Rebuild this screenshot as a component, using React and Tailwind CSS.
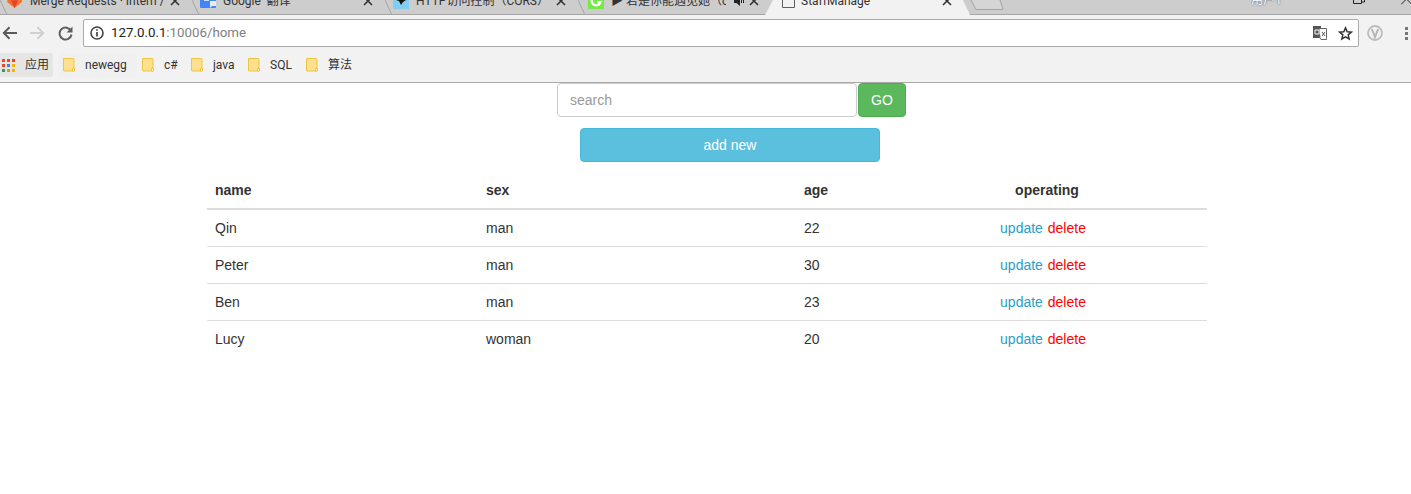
import React from "react";

const chrome = "font-['Roboto','Noto_Sans_CJK_SC',sans-serif]";

const rows = [
  { name: "Qin", sex: "man", age: 22 },
  { name: "Peter", sex: "man", age: 30 },
  { name: "Ben", sex: "man", age: 23 },
  { name: "Lucy", sex: "woman", age: 20 },
];

const bookmarks = [
  { label: "newegg", width: "w-[79px]", active: true },
  { label: "c#", width: "w-[49px]" },
  { label: "java", width: "w-[57px]" },
  { label: "SQL", width: "w-[58px]" },
  { label: "算法", width: "w-[60px]" },
];

const CloseIcon = () => (
  <svg width="10" height="10" viewBox="0 0 10 10" className="shrink-0">
    <path d="M1 1l8 8M9 1l-8 8" stroke="#333" strokeWidth="1.6" />
  </svg>
);

const Slant = () => (
  <svg width="8" height="15" className="absolute left-0 top-0">
    <path d="M0 0l6.5 14" stroke="#a5a5a5" fill="none" />
  </svg>
);

const Tab = ({ width, pad, right, icon, title, textWidth, extra }) => (
  <div className={`relative flex h-[15px] shrink-0 items-end overflow-hidden ${width}`}>
    <Slant />
    <div className={`flex h-[28px] w-full items-center ${pad} ${right}`}>
      {icon}
      <span className={`ml-[7px] overflow-hidden whitespace-nowrap text-[12px] text-[#333] ${textWidth}`}>{title}</span>
      <span className="ml-auto flex items-center gap-[5px]">
        {extra}
        <CloseIcon />
      </span>
    </div>
  </div>
);

const GitlabIcon = () => (
  <svg width="17" height="14" viewBox="0 0 17 16" className="shrink-0">
    <path d="M8.5 16L0 9l2-8 2.500 6h9L16 1l1 8z" fill="#fc6d26" />
    <path d="M8.500 16L4.500 7h8z" fill="#e24329" />
  </svg>
);

const TranslateIcon = () => (
  <svg width="16" height="16" viewBox="0 0 16 16" className="shrink-0">
    <rect width="16" height="15" rx="1" fill="#4285f4" />
    <path d="M10 8h6v5h-4l-2 2z" fill="#e8eaed" />
    <path d="M4 7h5" stroke="#fff" strokeWidth="1.500" />
  </svg>
);

const HttpIcon = () => (
  <svg width="16" height="16" viewBox="0 0 16 16" className="shrink-0">
    <rect width="16" height="16" fill="#83cdf2" />
    <path d="M4 2h9v5l-3 2-2 3-2-4-3-1z" fill="#111" />
  </svg>
);

const GrammarlyIcon = () => (
  <svg width="16" height="16" viewBox="0 0 16 16" className="shrink-0">
    <rect width="16" height="16" fill="#74e84b" />
    <path d="M12 5.500A4.500 4.500 0 1 0 12.500 9H9" stroke="#fff" strokeWidth="2.200" fill="none" />
  </svg>
);

const DocIcon = () => (
  <svg width="13" height="14" viewBox="0 0 13 14" className="shrink-0">
    <path d="M.5.500h8l4 4v9H.5z" fill="#f2f2f2" stroke="#5f5f5f" />
  </svg>
);

const SpeakerIcon = () => (
  <svg width="10" height="10" viewBox="0 0 10 10" className="shrink-0">
    <path d="M0 3h2.500L6 0v10L2.500 7H0z" fill="#222" />
    <path d="M7.500 2v5M9.500 1v6" stroke="#222" />
  </svg>
);

const FolderIcon = () => (
  <svg width="12" height="14" viewBox="0 0 12 14" className="shrink-0">
    <path d="M.5.500h9.500a1 1 0 0 1 1 1v11.500H1a.5.5 0 0 1-.5-.5z" fill="#ffe08e" stroke="#ecc545" />
    <path d="M9.500 10.500h2v2.500h-2z" fill="#fff" stroke="#ecc545" />
  </svg>
);

const AppsIcon = () => {
  const dots = ["#e9452f", "#e9452f", "#e9452f", "#e9452f", "#3b82e4", "#f5b400", "#2f9e52", "#f58a1f", "#f5b400"];
  return (
    <div className="grid shrink-0 grid-cols-[repeat(3,3px)] gap-[2px]">
      {dots.map((color, i) => (
        <svg key={i} width="3" height="3" className="block">
          <rect width="3" height="3" fill={color} />
        </svg>
      ))}
    </div>
  );
};

const TabStrip = () => (
  <div className={`flex h-[15px] items-start overflow-hidden bg-[#cdcdcd] shadow-[inset_0_-1px_0_#a5a5a5] ${chrome}`}>
    <Tab width="w-[192px]" pad="pl-[6px]" right="pr-[12px]" icon={<GitlabIcon />} title="Merge Requests · Intern /" textWidth="w-[135px]" />
    <Tab width="w-[193px]" pad="pl-[8px]" right="pr-[12px]" icon={<TranslateIcon />} title={"Google\u00a0\u00a0翻译"} textWidth="w-[130px]" />
    <Tab width="w-[193px]" pad="pl-[8px]" right="pr-[12px]" icon={<HttpIcon />} title="HTTP访问控制（CORS）" textWidth="w-[130px]" />
    <Tab
      width="w-[187px]"
      pad="pl-[10px]"
      right="pr-[6px]"
      icon={<GrammarlyIcon />}
      title="▶ 若是你能遇见她（c"
      textWidth="w-[115px]"
      extra={<SpeakerIcon />}
    />
    <div className="flex h-[15px] w-[205px] shrink-0 items-end overflow-hidden bg-[#f2f2f2] [clip-path:polygon(8px_0,198px_0,100%_100%,0_100%)]">
      <div className="flex h-[28px] w-full items-center pl-[17px] pr-[18px]">
        <DocIcon />
        <span className="ml-[6px] whitespace-nowrap text-[12px] text-[#333]">StaffManage</span>
        <span className="ml-auto">
          <CloseIcon />
        </span>
      </div>
    </div>
    <svg width="34" height="15" className="shrink-0">
      <path d="M1 0l5 9.500h27L30 0" fill="#d5d5d5" stroke="#a5a5a5" />
    </svg>
    <div className="ml-[247px] flex h-[15px] w-[31px] shrink-0 items-end overflow-hidden">
      <span className="mb-[8px] whitespace-nowrap text-[12px] leading-[14px] text-white [text-shadow:0_0_2px_#333]">用户1</span>
    </div>
    <svg width="12" height="5" className="ml-[71px] shrink-0">
      <path d="M.5 0v3.500h8V0M8.500 2h3V0" fill="none" stroke="#222" />
    </svg>
    <svg width="12" height="5" className="ml-[36px] shrink-0">
      <path d="M0 4.500L4.500 0M6.500 0L11 4.500" fill="none" stroke="#222" />
    </svg>
  </div>
);

const Toolbar = () => (
  <div className={`flex h-[32px] items-end bg-[#f2f2f2] ${chrome}`}>
    <div className="flex h-[28px] w-[83px] shrink-0 items-center pl-[2px]">
      <svg width="15" height="14" viewBox="0 0 15 14">
        <path d="M15 7H2M7.500 1.200L1.800 7l5.700 5.800" fill="none" stroke="#5a5a5a" strokeWidth="2" />
      </svg>
      <svg width="15" height="14" viewBox="0 0 15 14" className="ml-[13px]">
        <path d="M0 7h13M7.500 1.200L13.200 7l-5.700 5.800" fill="none" stroke="#d0d0d0" strokeWidth="2" />
      </svg>
      <svg width="15" height="15" viewBox="0 0 15 15" className="ml-[13px]">
        <path d="M13 5A6 6 0 1 0 13.500 8.500" fill="none" stroke="#5f5f5f" strokeWidth="2" />
        <path d="M14.500 .5v6h-6z" fill="#5f5f5f" />
      </svg>
    </div>
    <div className="flex h-[28px] w-[1276px] shrink-0 items-center rounded-[2px] border border-[#a9a9a9] bg-white pl-[6px] pr-[5px]">
      <svg width="14" height="14" viewBox="0 0 14 14" className="shrink-0">
        <circle cx="7" cy="7" r="6" fill="none" stroke="#444" strokeWidth="1.600" />
        <path d="M7 6v4.500M7 3.200v1.600" stroke="#444" strokeWidth="1.700" />
      </svg>
      <span className="ml-[7px] text-[13.300px] text-[#222]">
        127.0.0.1<span className="text-[#808080]">:10006/home</span>
      </span>
      <svg width="14" height="14" viewBox="0 0 14 14" className="ml-auto shrink-0">
        <path d="M0 0h8v12H0z" fill="#555" />
        <path d="M6 2.500h7.500v11H8L7 12z" fill="#fff" stroke="#666" />
        <path d="M2 4h4v4H2z" fill="none" stroke="#fff" />
        <path d="M9 6l3 4M12 6l-3 4" stroke="#555" />
      </svg>
      <svg width="15" height="15" viewBox="0 0 24 24" className="ml-[11px] shrink-0">
        <path d="M12 3l2.700 6.100 6.600.7-5 4.400 1.500 6.500L12 17.300l-5.800 3.400 1.500-6.500-5-4.400 6.600-.7z" fill="none" stroke="#333" strokeWidth="2.400" />
      </svg>
    </div>
    <div className="flex h-[28px] flex-1 items-center pl-[8px]">
      <svg width="16" height="16" viewBox="0 0 16 16" className="shrink-0">
        <circle cx="8" cy="8" r="7" fill="none" stroke="#bdbdbd" strokeWidth="1.800" />
        <path d="M4.800 4l3.200 8 3.200-8" fill="none" stroke="#b5b5b5" strokeWidth="2" />
      </svg>
      <div className="ml-[22px] grid shrink-0 gap-[2px]">
        <span className="size-[3px] bg-[#777]" />
        <span className="size-[3px] bg-[#777]" />
        <span className="size-[3px] bg-[#777]" />
      </div>
    </div>
  </div>
);

const Bookmarks = () => (
  <div className={`flex h-[36px] items-start border-b border-[#a9a9a9] bg-[#f2f2f2] pt-[6px] text-[12px] text-[#333] ${chrome}`}>
    <div className="flex h-[24px] w-[53px] shrink-0 items-center rounded-r-[3px] bg-[#e5e5e5] pl-[2px]">
      <AppsIcon />
      <span className="ml-[10px]">应用</span>
    </div>
    <div className="ml-[5px] flex">
      {bookmarks.map((item) => (
        <div
          key={item.label}
          className={`flex h-[24px] shrink-0 items-center gap-[10px] rounded-[3px] pl-[5px] ${item.width} ${item.active ? "bg-[#f0f0f0]" : ""}`}
        >
          <FolderIcon />
          <span className="whitespace-nowrap">{item.label}</span>
        </div>
      ))}
    </div>
  </div>
);

const Page = () => (
  <div className="font-['Liberation_Sans',sans-serif] text-[14px] leading-[20px] text-[#333]">
    <div className="ml-[557px] flex">
      <input
        placeholder="search"
        className="h-[34px] w-[300px] rounded-[4px] border border-[#ccc] bg-white px-[12px] text-[14px] outline-none placeholder:text-[#999]"
      />
      <button className="ml-px h-[34px] w-[48px] rounded-[4px] border border-[#4cae4c] bg-[#5cb85c] text-center text-[14px] text-white">
        GO
      </button>
    </div>
    <button className="ml-[580px] mt-[11px] block h-[34px] w-[300px] rounded-[4px] border border-[#46b8da] bg-[#5bc0de] text-center text-[14px] text-white">
      add new
    </button>
    <table className="ml-[207px] mt-[10px] w-[1000px] table-fixed border-separate border-spacing-0">
      <colgroup>
        <col className="w-[271px]" />
        <col className="w-[318px]" />
        <col className="w-[91px]" />
        <col className="w-[320px]" />
      </colgroup>
      <thead>
        <tr>
          <th className="border-b-2 border-[#ddd] p-[8px] text-left font-bold">name</th>
          <th className="border-b-2 border-[#ddd] p-[8px] text-left font-bold">sex</th>
          <th className="border-b-2 border-[#ddd] p-[8px] text-left font-bold">age</th>
          <th className="border-b-2 border-[#ddd] p-[8px] text-center font-bold">operating</th>
        </tr>
      </thead>
      <tbody>
        {rows.map((row, i) => {
          const line = i < rows.length - 1 ? "border-b border-[#ddd]" : "";
          return (
            <tr key={row.name}>
              <td className={`p-[8px] ${line}`}>{row.name}</td>
              <td className={`p-[8px] ${line}`}>{row.sex}</td>
              <td className={`p-[8px] ${line}`}>{row.age}</td>
              <td className={`py-[8px] pl-[8px] pr-[16px] text-center ${line}`}>
                <a className="text-[#2b9ec6]">update</a> <a className="ml-px text-[#ff0000]">delete</a>
              </td>
            </tr>
          );
        })}
      </tbody>
    </table>
  </div>
);

export default function App() {
  return (
    <div className="h-[494px] overflow-hidden bg-white">
      <TabStrip />
      <Toolbar />
      <Bookmarks />
      <Page />
    </div>
  );
}
